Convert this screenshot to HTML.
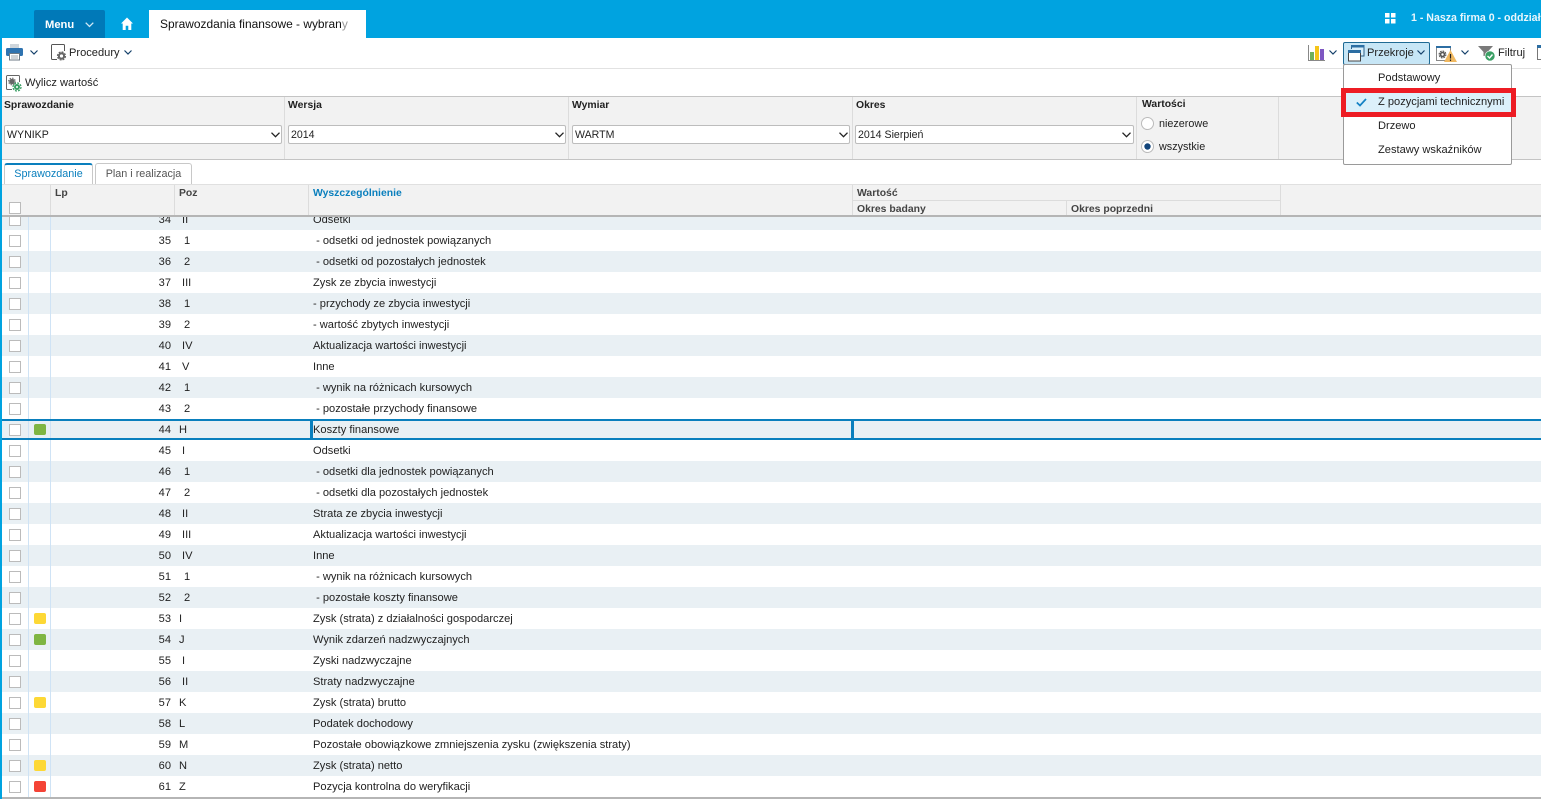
<!DOCTYPE html>
<html lang="pl"><head><meta charset="utf-8"><title>Sprawozdania finansowe</title>
<style>
html,body{margin:0;padding:0;background:#fff}
#p{position:relative;width:1541px;height:799px;overflow:hidden;font:11.1px/14px "Liberation Sans",sans-serif;color:#222;background:#fff}
.a{position:absolute;white-space:nowrap}
svg{position:absolute;display:block;overflow:visible}
b{font-weight:700}
.sel{position:absolute;top:125px;height:17px;background:#fff;border:1px solid #bdbdbd;border-radius:2px;line-height:18px;padding-left:2px;box-sizing:content-box}
.lab{position:absolute;top:99px;font-weight:700;font-size:10.4px;line-height:14px}
.h{font-weight:700;font-size:10.4px;color:#444}
#rows{position:absolute;left:2px;top:209px;width:1539px}
.r{position:relative;height:21px;line-height:21px;background:#fff}
.r.s{background:#e9f0f4}
.r>*{position:absolute;top:1px;font-style:normal;font-weight:400;text-decoration:none;white-space:nowrap}
.r i{left:7px;top:5px;width:10px;height:10px;border:1px solid #bbb;background:#fff}
.r s{left:32px;top:5px;width:12px;height:11px;border-radius:2px}
.r b{right:1370px}
.r u{left:177px}
.r u.m{left:180px}
.r u.d{left:182px}
.r em{left:311px}
.g{background:#7fb542}.y{background:#fdd835}.e{background:#f44336}
</style></head><body><div id="p">

<!-- top bar -->
<div class="a" style="left:0;top:0;width:1541px;height:38px;background:#00a3e0"></div>
<div class="a" style="left:34px;top:10px;width:71px;height:28px;background:#0079b8;border-radius:2px 2px 0 0"></div>
<div class="a" style="left:45px;top:18px;color:#fff;font-weight:700;font-size:11.2px">Menu</div>
<svg style="left:85px;top:22px" width="9" height="6" viewBox="0 0 9 6"><path d="M.7.7 4.500 4.500 8.300.7" fill="none" stroke="#cfe8f5" stroke-width="1.300"/></svg>
<svg style="left:121px;top:17px" width="12" height="13" viewBox="0 0 12 13"><path d="M6 .5 0 6.500h1.700V13h3V8.800h2.600V13h3V6.500H12z" fill="#fff"/></svg>
<div class="a" style="left:149px;top:10px;width:217px;height:28px;background:#fff"></div>
<div class="a" style="left:160px;top:17px;color:#111;font-size:11.95px">Sprawozdania finansowe - wybran<span style="color:#999">y</span></div>
<svg style="left:1385px;top:13px" width="11" height="11"><path d="M0 0h4.500v4.500H0zM6 0h4.500v4.500H6zM0 6h4.500v4.500H0zM6 6h4.500v4.500H6z" fill="#fff"/></svg>
<div class="a" style="left:1411px;top:11px;color:#e8f6fc;font-weight:700;font-size:10.6px">1 - Nasza firma 0 - oddział</div>

<!-- left edge -->
<div class="a" style="left:0;top:38px;width:2px;height:761px;background:#00a3e0;z-index:9"></div>

<!-- toolbar 1 -->
<div class="a" style="left:2px;top:68px;width:1539px;height:1px;background:#e2e2e2"></div>
<svg style="left:6px;top:44px" width="17" height="17" viewBox="0 0 17 17"><path d="M4 0h9v4H4z" fill="#cfd6dc"/><rect x="0" y="4" width="17" height="8" rx="1.500" fill="#2f73b0"/><path d="M3.500 9.500h10v6.500h-10z" fill="#fff" stroke="#6d7a86"/><path d="M5 12h7M5 14h7" stroke="#a0a8b0"/></svg>
<svg style="left:30px;top:50px" width="8" height="5" viewBox="0 0 8 5"><path d="M.5.500 4 4 7.500.500" fill="none" stroke="#14406a" stroke-width="1.200"/></svg>
<svg style="left:51px;top:44px" width="16" height="17" viewBox="0 0 16 17"><path d="M6 15.500H1.500a1 1 0 0 1-1-1V1.500a1 1 0 0 1 1-1h11a1 1 0 0 1 1 1V7" fill="none" stroke="#555"/><circle cx="10.500" cy="12" r="2.600" fill="none" stroke="#666" stroke-width="2"/><circle cx="10.500" cy="12" r="4" fill="none" stroke="#666" stroke-width="1.200" stroke-dasharray="2 1.140"/></svg>
<div class="a" style="left:69px;top:46px">Procedury</div>
<svg style="left:124px;top:50px" width="8" height="5" viewBox="0 0 8 5"><path d="M.5.500 4 4 7.500.500" fill="none" stroke="#14406a" stroke-width="1.200"/></svg>

<svg style="left:1308px;top:45px" width="17" height="16" viewBox="0 0 17 16"><path d="M.5 0v15.500H17" fill="none" stroke="#888"/><path d="M2 7h4v8H2z" fill="#6fb05c"/><path d="M7 1h4v14H7z" fill="#f5c518"/><path d="M12 4h4v11h-4z" fill="#7e57c2"/></svg>
<svg style="left:1329px;top:50px" width="8" height="5" viewBox="0 0 8 5"><path d="M.5.500 4 4 7.500.500" fill="none" stroke="#14406a" stroke-width="1.200"/></svg>
<div class="a" style="left:1343px;top:42px;width:85px;height:21px;background:#c7e6f6;border:1px solid #1f6a94;border-radius:2px"></div>
<svg style="left:1348px;top:45px" width="17" height="17" viewBox="0 0 17 17"><path d="M3.500 4V.5h12.500v10.500H13" fill="#d9eef9" stroke="#2c5f87"/><path d="M3 0h13.500v2.500H3z" fill="#2c6ea3"/><path d="M.5 5.500h12v10.500H.5z" fill="#fff" stroke="#444"/><path d="M0 5h13v3H0z" fill="#2c6ea3"/></svg>
<div class="a" style="left:1367px;top:46px">Przekroje</div>
<svg style="left:1417px;top:50px" width="8" height="5" viewBox="0 0 8 5"><path d="M.5.500 4 4 7.500.500" fill="none" stroke="#14406a" stroke-width="1.200"/></svg>
<svg style="left:1436px;top:46px" width="21" height="16" viewBox="0 0 21 16"><path d="M.5.500h14v14H.5z" fill="#fff" stroke="#888"/><path d="M0 0h15v2H0z" fill="#2c6ea3"/><circle cx="6.500" cy="8.500" r="2" fill="none" stroke="#555" stroke-width="1.600"/><circle cx="6.500" cy="8.500" r="3.400" fill="none" stroke="#555" stroke-width="1.100" stroke-dasharray="1.700 .97"/><path d="M14.500 4 21 16H8z" fill="#f0b860"/><path d="M14.500 8v4.500M14.500 13.500v1.500" stroke="#222" stroke-width="1.200"/></svg>
<svg style="left:1461px;top:50px" width="8" height="5" viewBox="0 0 8 5"><path d="M.5.500 4 4 7.500.500" fill="none" stroke="#14406a" stroke-width="1.200"/></svg>
<svg style="left:1478px;top:46px" width="18" height="16" viewBox="0 0 18 16"><path d="M0 0h15L9.500 6v4h-4V6z" fill="#7a7a7a"/><circle cx="12" cy="10" r="5" fill="#3a9f64" stroke="#fff" stroke-width=".6"/><path d="M9.500 10l2 2 3-3.500" fill="none" stroke="#fff" stroke-width="1.400"/></svg>
<div class="a" style="left:1498px;top:46px">Filtruj</div>
<svg style="left:1537px;top:45px" width="6" height="16" viewBox="0 0 6 16"><path d="M.5.500h8v14h-8z" fill="#fff" stroke="#777"/><path d="M0 0h8v3H0z" fill="#2c6ea3"/></svg>

<!-- toolbar 2 -->
<svg style="left:6px;top:75px" width="16" height="17" viewBox="0 0 16 17"><path d="M6 14.500H1.500a1 1 0 0 1-1-1V1.500a1 1 0 0 1 1-1h11a1 1 0 0 1 1 1V7" fill="none" stroke="#666"/><circle cx="6" cy="6.500" r="2.800" fill="#666"/><circle cx="6" cy="6.500" r="3.400" fill="none" stroke="#666" stroke-dasharray="1.500 1.170"/><circle cx="11" cy="12" r="3" fill="#3a9f64"/><circle cx="11" cy="12" r="4" fill="none" stroke="#3a9f64" stroke-width="1.300" stroke-dasharray="2 1.140"/><circle cx="11" cy="12" r="1" fill="#fff"/></svg>
<div class="a" style="left:25px;top:76px">Wylicz wartość</div>

<!-- filter panel -->
<div class="a" style="left:2px;top:96px;width:1539px;height:62px;background:#f2f2f2;border-top:1px solid #c4c4c4;border-bottom:1px solid #c4c4c4"></div>
<div class="a" style="left:284px;top:97px;width:1px;height:62px;background:#dcdcdc"></div>
<div class="a" style="left:568px;top:97px;width:1px;height:62px;background:#dcdcdc"></div>
<div class="a" style="left:852px;top:97px;width:1px;height:62px;background:#dcdcdc"></div>
<div class="a" style="left:1136px;top:97px;width:1px;height:62px;background:#dcdcdc"></div>
<div class="a" style="left:1278px;top:97px;width:1px;height:62px;background:#dcdcdc"></div>
<div class="lab" style="left:4px">Sprawozdanie</div>
<div class="lab" style="left:288px">Wersja</div>
<div class="lab" style="left:572px">Wymiar</div>
<div class="lab" style="left:856px">Okres</div>
<div class="lab" style="left:1142px;top:98px">Wartości</div>
<div class="sel" style="left:4px;width:274px;font-size:10.6px">WYNIKP</div>
<div class="sel" style="left:288px;width:274px;font-size:10.6px">2014</div>
<div class="sel" style="left:572px;width:274px;font-size:10.6px">WARTM</div>
<div class="sel" style="left:855px;width:275px;font-size:10.6px">2014 Sierpień</div>
<svg style="left:271px;top:132px" width="9" height="6" viewBox="0 0 9 6"><path d="M.5.700 4.500 4.700 8.500.700" fill="none" stroke="#222" stroke-width="1.300"/></svg>
<svg style="left:555px;top:132px" width="9" height="6" viewBox="0 0 9 6"><path d="M.5.700 4.500 4.700 8.500.700" fill="none" stroke="#222" stroke-width="1.300"/></svg>
<svg style="left:839px;top:132px" width="9" height="6" viewBox="0 0 9 6"><path d="M.5.700 4.500 4.700 8.500.700" fill="none" stroke="#222" stroke-width="1.300"/></svg>
<svg style="left:1122px;top:132px" width="9" height="6" viewBox="0 0 9 6"><path d="M.5.700 4.500 4.700 8.500.700" fill="none" stroke="#222" stroke-width="1.300"/></svg>
<svg style="left:1141px;top:117px" width="13" height="13"><circle cx="6.500" cy="6.500" r="6" fill="#fff" stroke="#bbb"/></svg>
<svg style="left:1141px;top:140px" width="13" height="13"><circle cx="6.500" cy="6.500" r="6" fill="#fff" stroke="#bbb"/><circle cx="6.500" cy="6.500" r="3.200" fill="#12447a"/></svg>
<div class="a" style="left:1159px;top:117px;font-size:10.8px">niezerowe</div>
<div class="a" style="left:1159px;top:140px;font-size:10.8px">wszystkie</div>

<!-- tabs -->
<div class="a" style="left:4px;top:163px;width:87px;height:20px;border:1px solid #c8c8c8;border-top:2px solid #0a7fbd;border-bottom:0;border-radius:3px 3px 0 0;background:#fff;color:#0a7fbd;text-align:center;line-height:19px;font-size:10.8px">Sprawozdanie</div>
<div class="a" style="left:95px;top:163px;width:95px;height:20px;border:1px solid #c8c8c8;border-bottom:0;border-radius:3px 3px 0 0;background:#fff;color:#555;text-align:center;line-height:21px;font-size:10.8px">Plan i realizacja</div>

<!-- rows -->
<div id="rows">
<div class="r s"><i></i><b>34</b><u class="m">II</u><em>Odsetki</em></div>
<div class="r"><i></i><b>35</b><u class="d">1</u><em>&nbsp;- odsetki od jednostek powiązanych</em></div>
<div class="r s"><i></i><b>36</b><u class="d">2</u><em>&nbsp;- odsetki od pozostałych jednostek</em></div>
<div class="r"><i></i><b>37</b><u class="m">III</u><em>Zysk ze zbycia inwestycji</em></div>
<div class="r s"><i></i><b>38</b><u class="d">1</u><em>- przychody ze zbycia inwestycji</em></div>
<div class="r"><i></i><b>39</b><u class="d">2</u><em>- wartość zbytych inwestycji</em></div>
<div class="r s"><i></i><b>40</b><u class="m">IV</u><em>Aktualizacja wartości inwestycji</em></div>
<div class="r"><i></i><b>41</b><u class="m">V</u><em>Inne</em></div>
<div class="r s"><i></i><b>42</b><u class="d">1</u><em>&nbsp;- wynik na różnicach kursowych</em></div>
<div class="r"><i></i><b>43</b><u class="d">2</u><em>&nbsp;- pozostałe przychody finansowe</em></div>
<div class="r s"><i></i><s class="g"></s><b>44</b><u>H</u><em>Koszty finansowe</em></div>
<div class="r"><i></i><b>45</b><u class="m">I</u><em>Odsetki</em></div>
<div class="r s"><i></i><b>46</b><u class="d">1</u><em>&nbsp;- odsetki dla jednostek powiązanych</em></div>
<div class="r"><i></i><b>47</b><u class="d">2</u><em>&nbsp;- odsetki dla pozostałych jednostek</em></div>
<div class="r s"><i></i><b>48</b><u class="m">II</u><em>Strata ze zbycia inwestycji</em></div>
<div class="r"><i></i><b>49</b><u class="m">III</u><em>Aktualizacja wartości inwestycji</em></div>
<div class="r s"><i></i><b>50</b><u class="m">IV</u><em>Inne</em></div>
<div class="r"><i></i><b>51</b><u class="d">1</u><em>&nbsp;- wynik na różnicach kursowych</em></div>
<div class="r s"><i></i><b>52</b><u class="d">2</u><em>&nbsp;- pozostałe koszty finansowe</em></div>
<div class="r"><i></i><s class="y"></s><b>53</b><u>I</u><em>Zysk (strata) z działalności gospodarczej</em></div>
<div class="r s"><i></i><s class="g"></s><b>54</b><u>J</u><em>Wynik zdarzeń nadzwyczajnych</em></div>
<div class="r"><i></i><b>55</b><u class="m">I</u><em>Zyski nadzwyczajne</em></div>
<div class="r s"><i></i><b>56</b><u class="m">II</u><em>Straty nadzwyczajne</em></div>
<div class="r"><i></i><s class="y"></s><b>57</b><u>K</u><em>Zysk (strata) brutto</em></div>
<div class="r s"><i></i><b>58</b><u>L</u><em>Podatek dochodowy</em></div>
<div class="r"><i></i><b>59</b><u>M</u><em>Pozostałe obowiązkowe zmniejszenia zysku (zwiększenia straty)</em></div>
<div class="r s"><i></i><s class="y"></s><b>60</b><u>N</u><em>Zysk (strata) netto</em></div>
<div class="r"><i></i><s class="e"></s><b>61</b><u>Z</u><em>Pozycja kontrolna do weryfikacji</em></div>
</div>
<div class="a" style="left:28px;top:216px;width:1px;height:581px;background:#cfe3f5"></div>
<div class="a" style="left:50px;top:216px;width:1px;height:581px;background:#cfe3f5"></div>

<!-- selected row -->
<div class="a" style="left:2px;top:419px;width:1539px;height:2px;background:#0a7fbd"></div>
<div class="a" style="left:2px;top:438px;width:1539px;height:2px;background:#0a7fbd"></div>
<div class="a" style="left:310px;top:419px;width:538px;height:17px;border:2px solid #0a7fbd;border-width:2px 3px"></div>
<div class="a" style="left:2px;top:797px;width:1539px;height:2px;background:#b5b5b5"></div>

<!-- grid header -->
<div class="a" style="left:2px;top:184px;width:1539px;height:30px;background:#f2f2f2;border-top:1px solid #e0e0e0"></div>
<div class="a" style="left:2px;top:215px;width:1539px;height:2px;background:#b5b5b5"></div>
<div class="a" style="left:50px;top:185px;width:1px;height:30px;background:#dcdcdc"></div>
<div class="a" style="left:174px;top:185px;width:1px;height:30px;background:#dcdcdc"></div>
<div class="a" style="left:308px;top:185px;width:1px;height:30px;background:#dcdcdc"></div>
<div class="a" style="left:852px;top:185px;width:1px;height:30px;background:#dcdcdc"></div>
<div class="a" style="left:1280px;top:185px;width:1px;height:30px;background:#dcdcdc"></div>
<div class="a" style="left:853px;top:200px;width:427px;height:1px;background:#dcdcdc"></div>
<div class="a" style="left:1066px;top:200px;width:1px;height:15px;background:#dcdcdc"></div>
<div class="a" style="left:9px;top:202px;width:10px;height:10px;border:1px solid #bbb;background:#fff"></div>
<div class="a h" style="left:55px;top:185px;line-height:16px;height:16px;padding-top:0;margin-top:0"><span style="position:relative;top:1px">Lp</span></div>
<div class="a h" style="left:179px;top:185px;line-height:16px"><span style="position:relative;top:1px">Poz</span></div>
<div class="a h" style="left:313px;top:185px;line-height:16px;color:#0a7fbd"><span style="position:relative;top:1px">Wyszczególnienie</span></div>
<div class="a h" style="left:857px;top:185px;line-height:16px"><span style="position:relative;top:1px">Wartość</span></div>
<div class="a h" style="left:857px;top:201px;line-height:16px"><span style="position:relative;top:1px">Okres badany</span></div>
<div class="a h" style="left:1071px;top:201px;line-height:16px"><span style="position:relative;top:1px">Okres poprzedni</span></div>

<!-- dropdown -->
<div class="a" style="left:1343px;top:64px;width:167px;height:99px;background:#fff;border:1px solid #9a9a9a;border-radius:2px;z-index:10"></div>
<div class="a" style="left:1346px;top:93px;width:165px;height:19px;background:#dcf0fa;z-index:11"></div>
<div class="a" style="left:1341px;top:88px;width:165px;height:19px;border:5px solid #ed1c24;z-index:12"></div>
<svg style="left:1356px;top:98px;z-index:13" width="11" height="9" viewBox="0 0 11 9"><path d="M.8 4.500 4 7.500 10 1" fill="none" stroke="#1481c4" stroke-width="1.700"/></svg>
<div class="a" style="left:1378px;top:71px;z-index:13">Podstawowy</div>
<div class="a" style="left:1378px;top:95px;z-index:13">Z pozycjami technicznymi</div>
<div class="a" style="left:1378px;top:119px;z-index:13">Drzewo</div>
<div class="a" style="left:1378px;top:143px;z-index:13">Zestawy wskaźników</div>
</div></body></html>
